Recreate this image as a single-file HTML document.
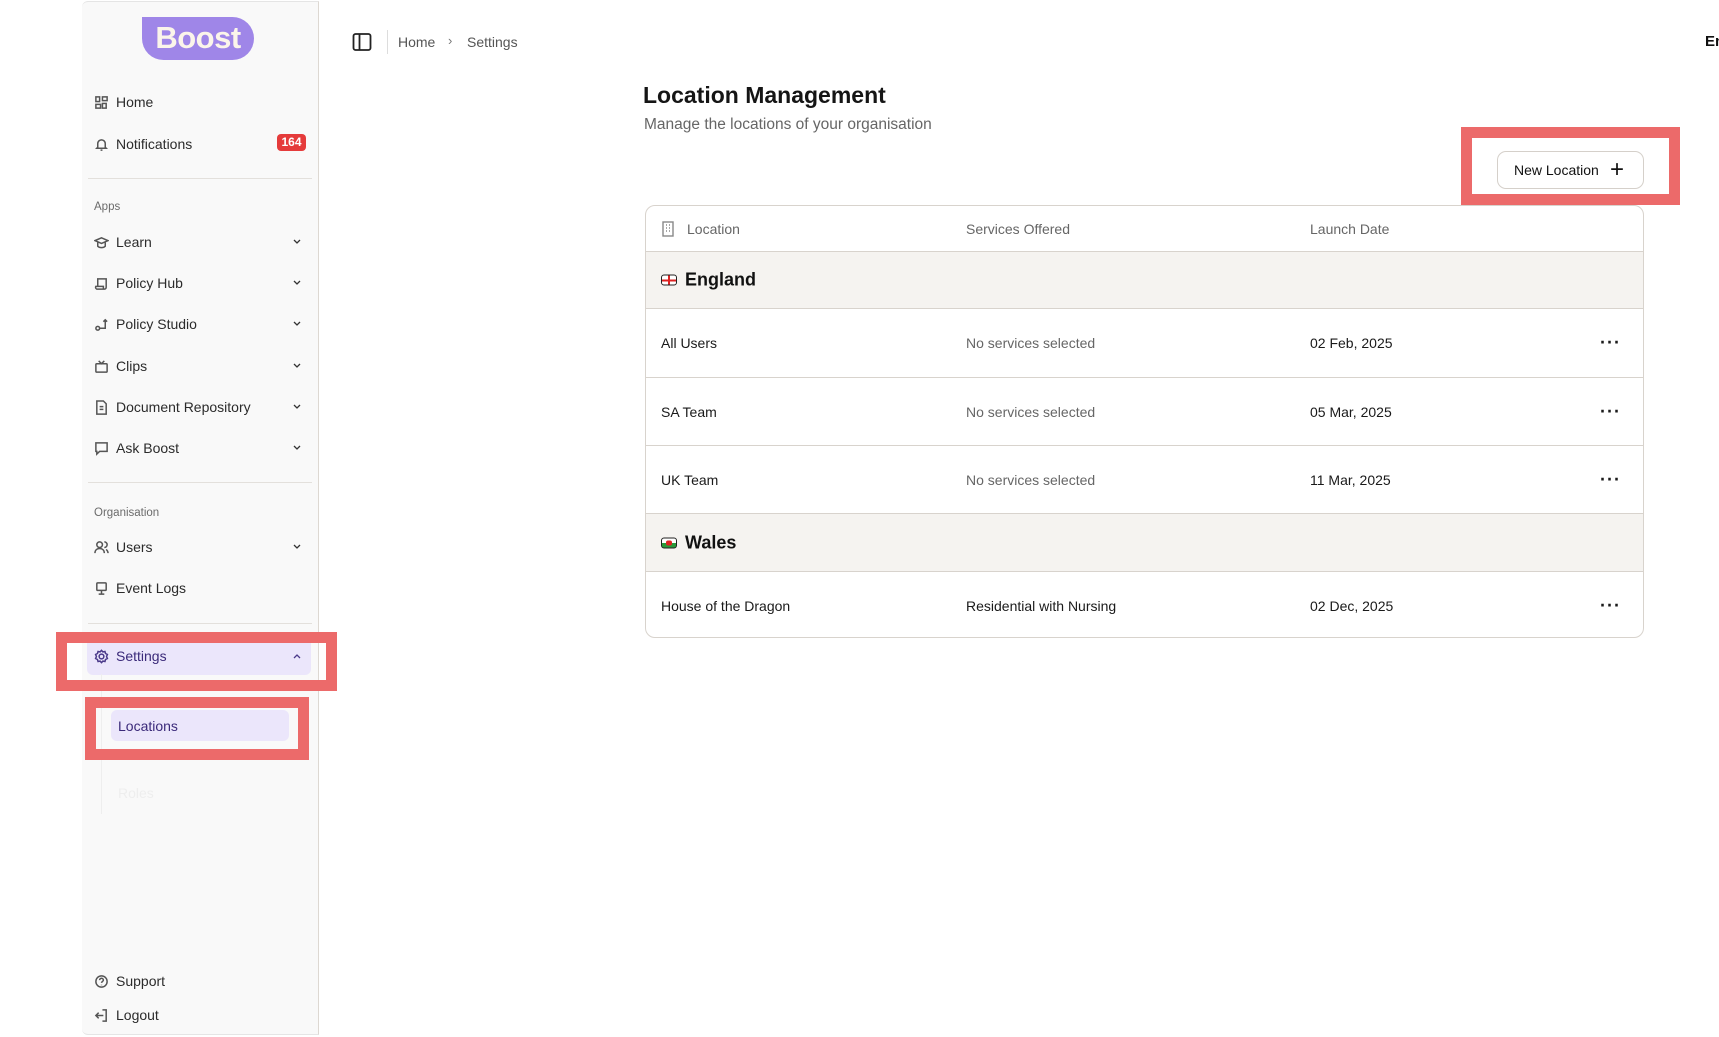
<!DOCTYPE html><html><head><meta charset="utf-8"><style>
*{box-sizing:border-box;margin:0;padding:0}
body{width:1719px;height:1037px;background:#fff;font-family:"Liberation Sans",sans-serif;position:relative;overflow:hidden;color:#1a1a1a}
.a{position:absolute}
.sb{left:82px;top:1px;width:237px;height:1034px;background:#f9f9f9;border-right:1px solid #ddd8d2;border-top:1px solid #e5e5e5;border-bottom:1px solid #e5e5e5;border-radius:6px 0 0 6px}
.ni{position:absolute;left:0;font-size:14px;color:#2b2b2b;display:flex;align-items:center;height:20px}
.ni svg{position:absolute;left:12px;width:15px;height:15px;fill:none;stroke:#555;stroke-width:1.6}
.ni span{position:absolute;left:34px;white-space:nowrap}
.ni svg.chev{position:absolute;left:210px;top:5px;width:10px;height:10px;stroke-width:1.3;stroke:#333}
.hd{font-size:11.5px;color:#6b6b6b}
.div{position:absolute;left:6px;width:224px;height:1px;background:#e3e0dc}
.red{position:absolute;border:11px solid #ec6a6a}
.tb{left:645px;top:205px;width:999px;height:433px;border:1px solid #d8d3cd;border-radius:10px;overflow:hidden}
.row{position:absolute;left:0;width:100%;border-top:1px solid #d8d3cd;font-size:14px}
.row div{position:absolute;top:50%;transform:translateY(-50%);white-space:nowrap}
.g{background:#f5f3f0}
.dots{left:954px;font-size:18px;font-weight:bold;letter-spacing:1px}
</style></head><body>
<div class="a sb">
 <div class="a" style="left:60px;top:15px;width:112px;height:43px;background:#9f86e8;border-radius:0 22px 22px 22px;color:#fbf5ea;font-weight:bold;font-size:31px;text-align:center;line-height:42px;letter-spacing:-0.5px">Boost</div>
 <div class="ni" style="top:90px"><svg viewBox="0 0 16 16"><rect x="2" y="2" width="4" height="5"/><rect x="9" y="2" width="5" height="4"/><rect x="2" y="10" width="5" height="4"/><rect x="9" y="9" width="4" height="5"/></svg><span>Home</span></div>
 <div class="ni" style="top:132px"><svg viewBox="0 0 16 16"><path d="M4 11V7a4 4 0 018 0v4l1 1H3zM7 14h2"/></svg><span>Notifications</span></div>
 <div class="a" style="left:195px;top:132px;width:29px;height:17px;background:#e53b3b;border-radius:4px;color:#fff;font-size:12px;font-weight:bold;text-align:center;line-height:17px">164</div>
 <div class="div" style="top:176px"></div>
 <div class="a hd" style="left:12px;top:199px">Apps</div>
 <div class="ni" style="top:230px"><svg viewBox="0 0 16 16"><path d="M1 6l7-3 7 3-7 3zM4 8v4c2 2 6 2 8 0V8"/></svg><span>Learn</span><svg class="chev" viewBox="0 0 10 10"><path d="M2 3l3 3 3-3"/></svg></div>
 <div class="ni" style="top:271px"><svg viewBox="0 0 16 16"><path d="M4 11V3h9v9a2 2 0 01-2 2H3a2 2 0 01-1-3h8v3"/></svg><span>Policy Hub</span><svg class="chev" viewBox="0 0 10 10"><path d="M2 3l3 3 3-3"/></svg></div>
 <div class="ni" style="top:312px"><svg viewBox="0 0 16 16"><circle cx="4" cy="12" r="2"/><path d="M6 12h6V3M10 5l2-2 2 2"/></svg><span>Policy Studio</span><svg class="chev" viewBox="0 0 10 10"><path d="M2 3l3 3 3-3"/></svg></div>
 <div class="ni" style="top:354px"><svg viewBox="0 0 16 16"><rect x="2" y="5" width="12" height="9" rx="1"/><path d="M5 2l3 3 3-3"/></svg><span>Clips</span><svg class="chev" viewBox="0 0 10 10"><path d="M2 3l3 3 3-3"/></svg></div>
 <div class="ni" style="top:395px"><svg viewBox="0 0 16 16"><path d="M3 1h7l3 3v11H3zM6 7h4M6 10h4"/></svg><span>Document Repository</span><svg class="chev" viewBox="0 0 10 10"><path d="M2 3l3 3 3-3"/></svg></div>
 <div class="ni" style="top:436px"><svg viewBox="0 0 16 16"><path d="M2 2h12v9H6l-3 3v-3H2z"/></svg><span>Ask Boost</span><svg class="chev" viewBox="0 0 10 10"><path d="M2 3l3 3 3-3"/></svg></div>
 <div class="div" style="top:480px"></div>
 <div class="a hd" style="left:12px;top:505px">Organisation</div>
 <div class="ni" style="top:535px"><svg viewBox="0 0 16 16"><circle cx="6" cy="5" r="3"/><path d="M1 14c0-3 2-5 5-5s5 2 5 5M11 2a3 3 0 010 6M13 10c1 1 2 2 2 4"/></svg><span>Users</span><svg class="chev" viewBox="0 0 10 10"><path d="M2 3l3 3 3-3"/></svg></div>
 <div class="ni" style="top:576px"><svg viewBox="0 0 16 16"><rect x="3" y="2" width="10" height="8" rx="1"/><path d="M8 10v4M5 14h6"/></svg><span>Event Logs</span></div>
 <div class="div" style="top:621px"></div>
 <div class="a" style="left:5px;top:636px;width:224px;height:37px;background:#ebe6fb;border-radius:6px"></div>
 <div class="ni" style="top:644px;color:#3b2a7a"><svg viewBox="0 0 16 16" style="stroke:#4b3a8a"><circle cx="8" cy="8" r="2.5"/><path d="M8 1.5l1.5 1.6 2.2-.4.6 2.1 2 1-.9 2.2.9 2.2-2 1-.6 2.1-2.2-.4L8 14.5l-1.5-1.6-2.2.4-.6-2.1-2-1 .9-2.2-.9-2.2 2-1 .6-2.1 2.2.4z"/></svg><span>Settings</span><svg class="chev" viewBox="0 0 10 10" style="stroke:#4b3a8a"><path d="M2 7l3-3 3 3"/></svg></div>
 <div class="a" style="left:19px;top:672px;width:1px;height:140px;background:#eee"></div>
 <div class="a" style="left:29px;top:708px;width:178px;height:31px;background:#ebe6fb;border-radius:6px"></div>
 <div class="a" style="left:36px;top:716px;font-size:14px;color:#3b2a7a">Locations</div>
 <div class="a" style="left:36px;top:783px;font-size:14px;color:#eee">Roles</div>
 <div class="ni" style="top:969px"><svg viewBox="0 0 16 16"><circle cx="8" cy="8" r="6"/><path d="M6 6.5a2 2 0 114 0c0 1.5-2 1.5-2 3M8 11.5v.5"/></svg><span>Support</span></div>
 <div class="ni" style="top:1003px"><svg viewBox="0 0 16 16"><path d="M9 2h4v12H9M2 8h8M5 5L2 8l3 3"/></svg><span>Logout</span></div>
</div>
<div class="red" style="left:56px;top:632px;width:281px;height:59px"></div>
<div class="red" style="left:85px;top:697px;width:224px;height:63px"></div>
<svg class="a" style="left:352px;top:32px" width="20" height="20" viewBox="0 0 20 20" fill="none" stroke="#222" stroke-width="1.8"><rect x="1.5" y="2" width="17" height="16" rx="2"/><path d="M7.5 2v16"/></svg>
<div class="a" style="left:387px;top:30px;width:1px;height:24px;background:#ddd"></div>
<div class="a" style="left:398px;top:34px;font-size:14px;color:#555">Home</div>
<div class="a" style="left:448px;top:33px;font-size:13px;color:#777">›</div>
<div class="a" style="left:467px;top:34px;font-size:14px;color:#555">Settings</div>
<div class="a" style="left:1705px;top:33px;font-size:15px;font-weight:bold;color:#111">En</div>
<div class="a" style="left:643px;top:82px;font-size:23px;font-weight:bold;color:#151515">Location Management</div>
<div class="a" style="left:644px;top:116px;font-size:15.5px;color:#666">Manage the locations of your organisation</div>
<div class="red" style="left:1461px;top:127px;width:219px;height:78px"></div>
<div class="a" style="left:1497px;top:151px;width:147px;height:38px;border:1px solid #d5d0ca;border-radius:9px;font-size:14px;line-height:36px;padding-left:16px;color:#111">New Location<span style="position:absolute;left:112px;top:0;font-size:24px;font-weight:300">+</span></div>
<div class="a tb">
 <div class="row" style="top:0;height:45px;border-top:none;color:#666"><div style="left:15px"><svg width="14" height="16" viewBox="0 0 14 16" fill="none" stroke="#888" stroke-width="1.4" style="vertical-align:-3px"><rect x="2" y="1" width="10" height="14"/><path d="M5 4h1M8 4h1M5 7h1M8 7h1M5 10h1M8 10h1"/></svg></div><div style="left:41px">Location</div><div style="left:320px">Services Offered</div><div style="left:664px">Launch Date</div></div>
 <div class="row g" style="top:45px;height:57px"><div style="left:15px;font-size:18px;font-weight:bold;color:#111"><span style="display:inline-block;width:16px;height:11px;border:1.3px solid #222;border-radius:3px;vertical-align:0;margin-right:8px;background:linear-gradient(#fff,#fff);position:relative"><span style="position:absolute;left:5.5px;top:0;width:2px;height:100%;background:#d22"></span><span style="position:absolute;left:0;top:3.5px;width:100%;height:2px;background:#d22"></span></span>England</div></div>
 <div class="row" style="top:102px;height:69px"><div style="left:15px">All Users</div><div style="left:320px;color:#666">No services selected</div><div style="left:664px">02 Feb, 2025</div><div class="dots">···</div></div>
 <div class="row" style="top:171px;height:68px"><div style="left:15px">SA Team</div><div style="left:320px;color:#666">No services selected</div><div style="left:664px">05 Mar, 2025</div><div class="dots">···</div></div>
 <div class="row" style="top:239px;height:68px"><div style="left:15px">UK Team</div><div style="left:320px;color:#666">No services selected</div><div style="left:664px">11 Mar, 2025</div><div class="dots">···</div></div>
 <div class="row g" style="top:307px;height:58px"><div style="left:15px;font-size:18px;font-weight:bold;color:#111"><span style="display:inline-block;width:16px;height:11px;border:1.3px solid #222;border-radius:3px;margin-right:8px;background:linear-gradient(#fff 50%,#2a9a3a 50%);position:relative"><span style="position:absolute;left:4px;top:2px;width:6px;height:5px;background:#d22;border-radius:2px"></span></span>Wales</div></div>
 <div class="row" style="top:365px;height:68px"><div style="left:15px">House of the Dragon</div><div style="left:320px">Residential with Nursing</div><div style="left:664px">02 Dec, 2025</div><div class="dots">···</div></div>
</div>
</body></html>
